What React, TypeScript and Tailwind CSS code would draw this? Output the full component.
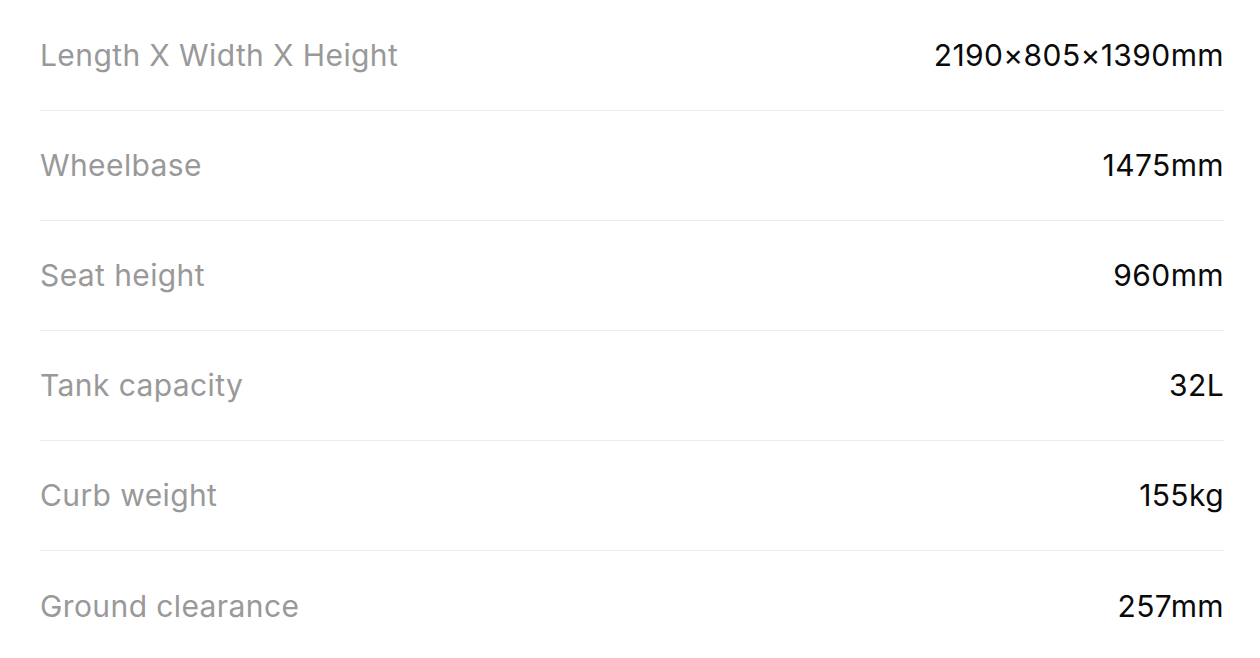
const specs: [string, string][] = [
  ["Length X Width X Height", "2190×805×1390mm"],
  ["Wheelbase", "1475mm"],
  ["Seat height", "960mm"],
  ["Tank capacity", "32L"],
  ["Curb weight", "155kg"],
  ["Ground clearance", "257mm"],
];

export default function App() {
  return (
    <main className="min-h-screen bg-white pl-10 pr-9 pt-px font-['Inter',sans-serif]">
      {specs.map(([label, value], i) => (
        <div
          key={label}
          className={`flex h-[110px] items-center justify-between ${
            i < specs.length - 1 ? "border-b border-[#ebebeb]" : ""
          }`}
        >
          <span className="text-[30px] font-normal tracking-[0.4px] text-[#999999]">{label}</span>
          <span className="text-[30px] font-normal tracking-[0.4px] text-[#0a0a0a]">{value}</span>
        </div>
      ))}
    </main>
  );
}
